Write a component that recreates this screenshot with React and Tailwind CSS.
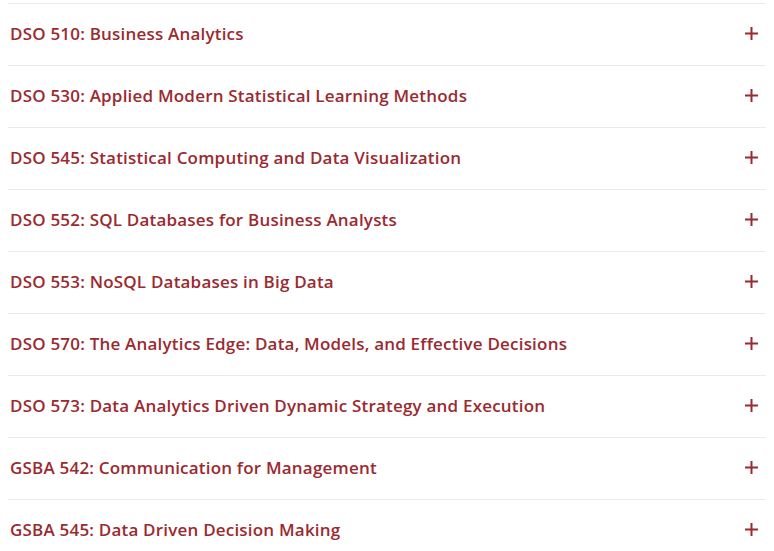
import React, { useState } from 'react';

const courses = [
  'DSO 510: Business Analytics',
  'DSO 530: Applied Modern Statistical Learning Methods',
  'DSO 545: Statistical Computing and Data Visualization',
  'DSO 552: SQL Databases for Business Analysts',
  'DSO 553: NoSQL Databases in Big Data',
  'DSO 570: The Analytics Edge: Data, Models, and Effective Decisions',
  'DSO 573: Data Analytics Driven Dynamic Strategy and Execution',
  'GSBA 542: Communication for Management',
  'GSBA 545: Data Driven Decision Making',
];

const PlusIcon = () => (
  <svg width="13" height="13" viewBox="0 0 13 13" className="shrink-0">
    <path d="M6.5 0v13M0 6.5h13" stroke="currentColor" strokeWidth="2" />
  </svg>
);

const App = () => {
  const [open, setOpen] = useState(null);

  return (
    <div className="min-h-[551px] bg-white pt-[3px] px-2 font-['Open_Sans',sans-serif]">
      {courses.map((title, i) => (
        <div key={i} className="border-t border-[#ebebeb]">
          <button
            className="flex h-[61px] w-[752px] items-center justify-between pb-[2px] pl-[2px] pr-[2px] text-left text-[#9b2a30]"
            onClick={() => setOpen(open === i ? null : i)}
          >
            <span className="text-[17px] font-semibold tracking-[0.2px]">{title}</span>
            <PlusIcon />
          </button>
        </div>
      ))}
    </div>
  );
};

export default App;
